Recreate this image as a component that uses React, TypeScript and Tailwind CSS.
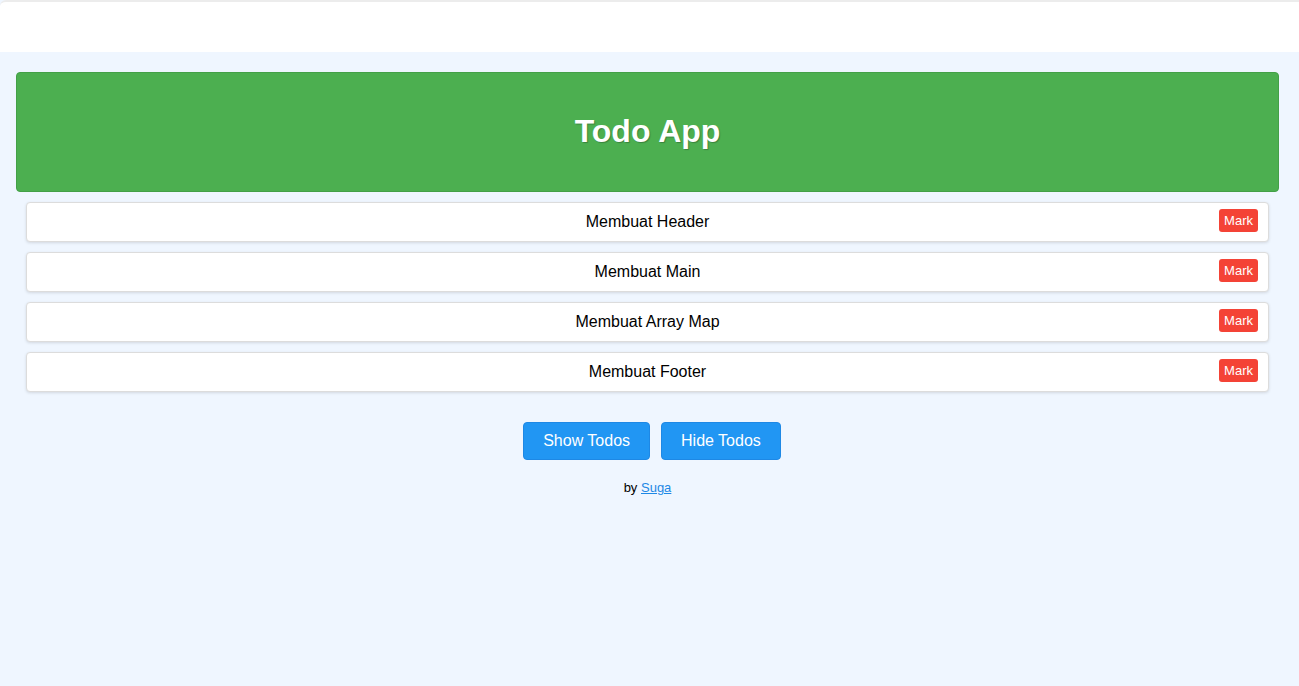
const todos = ["Membuat Header", "Membuat Main", "Membuat Array Map", "Membuat Footer"];

export default function App() {
  return (
    <div className="min-h-[686px] bg-[#eff6ff] font-['Liberation_Sans',Arial,sans-serif]">
      {/* top strip */}
      <div className="h-[52px] bg-white border-t-2 border-[#ececec] rounded-tl-[6px]" />

      <div className="pl-4 pr-5 pt-5">
        <header className="h-[120px] flex items-center justify-center bg-[#4caf50] border border-[#43a047] rounded-[4px]">
          <h1 className="-mt-[2px] text-[32px] font-bold text-white [text-shadow:1px_1px_1px_rgba(0,0,0,0.25)]">Todo App</h1>
        </header>

        <ul className="mx-[10px] mt-[10px] flex flex-col gap-[10px]">
          {todos.map((t) => (
            <li
              key={t}
              className="relative h-10 flex items-center justify-center bg-white border border-[#dcdcdc] rounded-[4px] shadow-[0_1px_3px_rgba(0,0,0,0.12)]"
            >
              <span className="text-[16px] text-black">{t}</span>
              <button className="absolute right-[10px] top-[6px] h-[23px] px-[5px] bg-[#f44336] text-white text-[13px] font-medium rounded-[3px]">
                Mark
              </button>
            </li>
          ))}
        </ul>

        <div className="mt-[30px] pl-[9px] flex justify-center gap-[11px]">
          <button className="h-[38px] px-[19px] bg-[#2196f3] border border-[#1e88e5] text-white text-[16px] rounded-[4px]">
            Show Todos
          </button>
          <button className="h-[38px] px-[19px] bg-[#2196f3] border border-[#1e88e5] text-white text-[16px] rounded-[4px]">
            Hide Todos
          </button>
        </div>

        <p className="mt-[18px] text-center text-[13px] text-black">
          by <a href="#" className="text-[#1e88e5] underline">Suga</a>
        </p>
      </div>
    </div>
  );
}
